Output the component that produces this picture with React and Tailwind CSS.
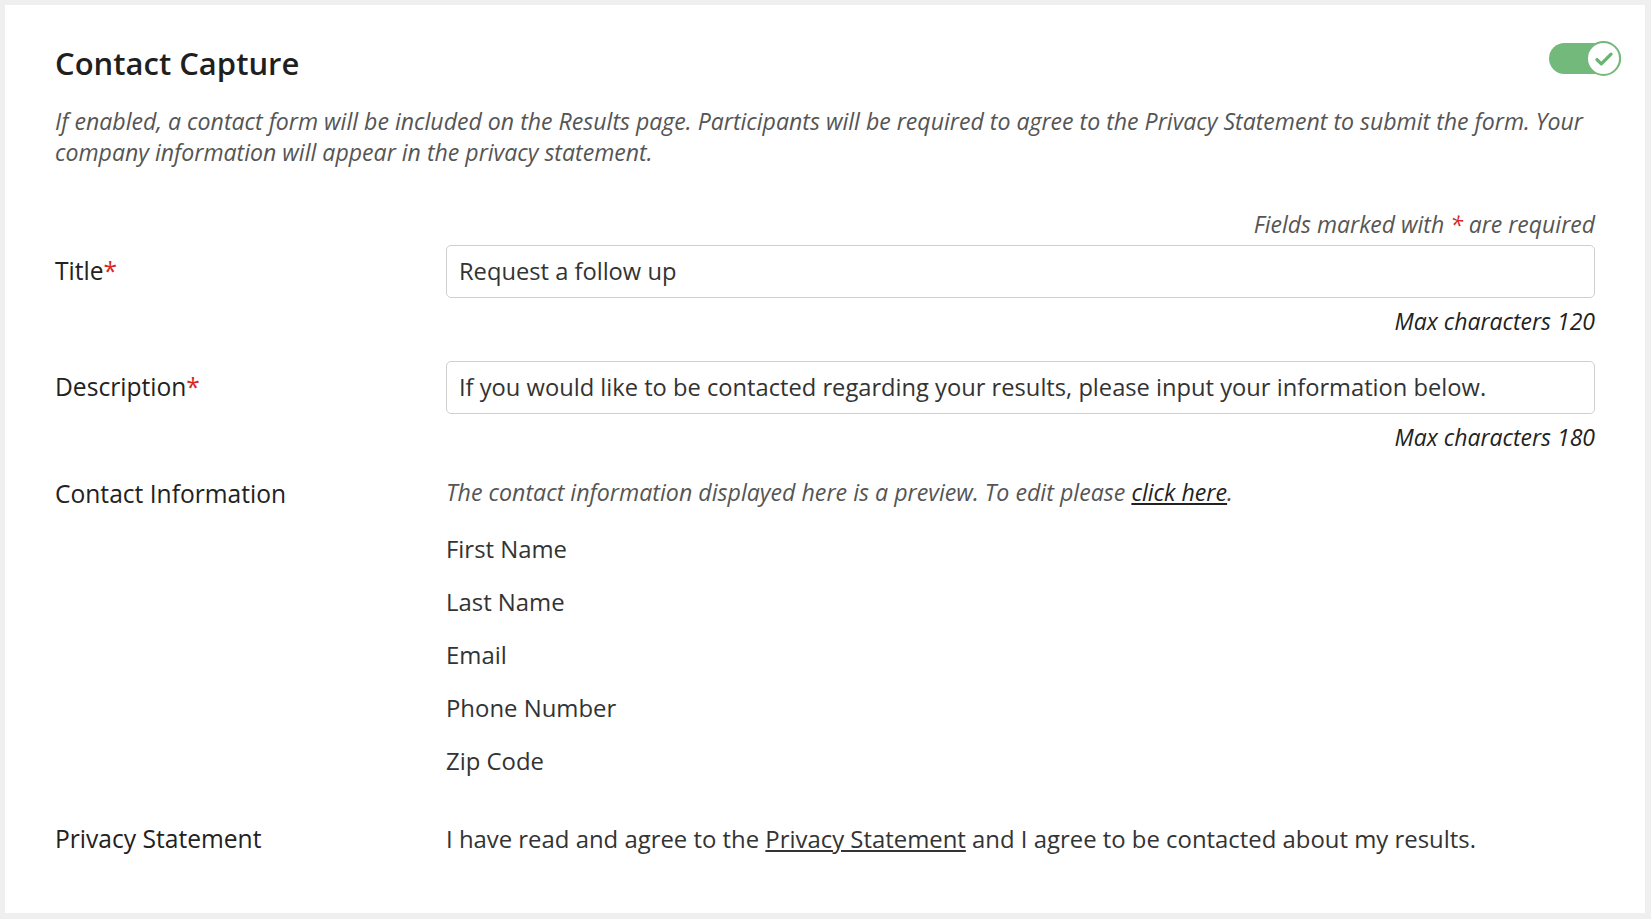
function Toggle() {
   return (
      <div className="relative mr-[-26px] mt-[0px] h-[31px] w-[72px] rounded-full bg-[#74b97c]">
         <div className="absolute right-[0px] top-[-2px] flex h-[35px] w-[35px] items-center justify-center rounded-full border-2 border-[#74b97c] bg-white">
            <svg width="26" height="26" viewBox="0 0 24 24" fill="none">
               <path
                  d="M5.5 12.5l4 4L18.5 7.5"
                  stroke="#6ab372"
                  strokeWidth="3"
                  strokeLinecap="round"
                  strokeLinejoin="round"
               />
            </svg>
         </div>
      </div>
   );
}

function Req() {
   return <span className="text-[#d8261f]">*</span>;
}

function FieldRow({ label, value, max }) {
   return (
      <>
         <div className="grid grid-cols-[391px_1fr] items-center">
            <div className="text-[24.6px] text-[#222]">
               {label}
               <Req />
            </div>
            <div className="flex h-[53px] items-center rounded-[5px] border border-[#cfcfcf] bg-white px-[12px] text-[23.7px] text-[#333]">
               {value}
            </div>
         </div>
         <div className="mt-[8px] text-right text-[23px] italic leading-[30px] text-[#222]">
            Max characters {max}
         </div>
      </>
   );
}

export default function App() {
   const contactFields = ['First Name', 'Last Name', 'Email', 'Phone Number', 'Zip Code'];

   return (
      <div
         className="h-[919px] w-[1651px] bg-[#efefef] p-[5px] pr-[6px] pb-[6px]"
         style={{ fontFamily: '"Open Sans", "Liberation Sans", sans-serif' }}
      >
         <div className="h-full bg-white px-[50px] pt-[38px]">
            <div className="flex h-[40px] items-start justify-between">
               <h1 className="text-[31px] font-semibold leading-[40px] text-[#1f1f1f]">
                  Contact Capture
               </h1>
               <Toggle />
            </div>

            <p className="mt-[23px] text-[23.1px] italic leading-[30.5px] text-[#555]">
               If enabled, a contact form will be included on the Results page. Participants will be
               required to agree to the Privacy Statement to submit the form. Your company information
               will appear in the privacy statement.
            </p>

            <div className="mt-[42px] text-right text-[23px] italic leading-[30px] text-[#555]">
               Fields marked with <Req /> are required
            </div>

            <div className="mt-[6px]">
               <FieldRow label="Title" value="Request a follow up" max="120" />
            </div>
            <div className="mt-[25px]">
               <FieldRow
                  label="Description"
                  value="If you would like to be contacted regarding your results, please input your information below."
                  max="180"
               />
            </div>

            <div className="mt-[25px] grid grid-cols-[391px_1fr]">
               <div className="text-[24.6px] leading-[34px] text-[#222]">Contact Information</div>
               <div>
                  <div className="text-[23.2px] italic leading-[30px] text-[#555]">
                     The contact information displayed here is a preview. To edit please{' '}
                     <a href="#" className="text-[#222] underline">
                        click here
                     </a>
                     .
                  </div>
                  <div className="mt-[27px] flex flex-col gap-[23px]">
                     {contactFields.map((f) => (
                        <div key={f} className="text-[23.9px] leading-[30px] text-[#333]">
                           {f}
                        </div>
                     ))}
                  </div>
               </div>
            </div>

            <div className="mt-[48px] grid grid-cols-[391px_1fr] items-center">
               <div className="text-[24.6px] leading-[30px] text-[#222]">Privacy Statement</div>
               <div className="text-[23.9px] leading-[30px] text-[#333]">
                  I have read and agree to the{' '}
                  <a href="#" className="underline">
                     Privacy Statement
                  </a>{' '}
                  and I agree to be contacted about my results.
               </div>
            </div>
         </div>
      </div>
   );
}
